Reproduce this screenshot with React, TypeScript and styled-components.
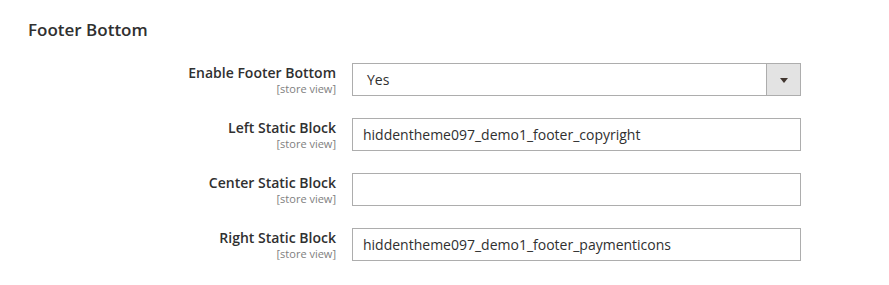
import React from 'react';
import styled, { createGlobalStyle } from 'styled-components';

const GlobalStyle = createGlobalStyle`
  body {
    margin: 0;
    background: #ffffff;
    font-family: "Open Sans", "Liberation Sans", sans-serif;
    color: #303030;
  }
`;

const Section = styled.section`
  padding: 19px 0 0 28px;
  width: 889px;
  height: 285px;
  box-sizing: border-box;
`;

const Title = styled.h2`
  margin: 0 0 22px;
  font-size: 17px;
  line-height: 22px;
  font-weight: 600;
  color: #303030;
`;

const Fields = styled.div`
  display: grid;
  grid-template-columns: 308px 449px;
  column-gap: 16px;
  row-gap: 22px;
`;

const LabelCell = styled.div`
  display: flex;
  flex-direction: column;
  align-items: flex-end;
  padding-top: 1px;
`;

const LabelText = styled.span`
  font-size: 14px;
  font-weight: 600;
  line-height: 18px;
  color: #303030;
`;

const Scope = styled.span`
  font-size: 11px;
  line-height: 13px;
  color: #808080;
`;

const TextInput = styled.input`
  box-sizing: border-box;
  width: 100%;
  height: 33px;
  margin: 0;
  padding: 0 10px;
  border: 1px solid #adadad;
  border-radius: 0;
  font-family: "Open Sans", "Liberation Sans", sans-serif;
  font-size: 14px;
  color: #303030;
  background: #ffffff;
  outline: none;
`;

const SelectBox = styled.div`
  box-sizing: border-box;
  display: flex;
  align-items: stretch;
  height: 33px;
  border: 1px solid #adadad;
  background: #ffffff;
`;

const SelectValue = styled.span`
  flex: 1;
  display: flex;
  align-items: center;
  padding-left: 14px;
  font-size: 14px;
  color: #303030;
`;

const SelectButton = styled.span`
  width: 33px;
  display: flex;
  align-items: center;
  justify-content: center;
  background: #e3e3e3;
  border-left: 1px solid #adadad;
`;

const Arrow = styled.span`
  width: 0;
  height: 0;
  border-left: 4px solid transparent;
  border-right: 4px solid transparent;
  border-top: 5px solid #41362f;
  margin-top: 1px;
`;

const fields = [
  { label: 'Left Static Block', value: 'hiddentheme097_demo1_footer_copyright' },
  { label: 'Center Static Block', value: '' },
  { label: 'Right Static Block', value: 'hiddentheme097_demo1_footer_paymenticons' },
];

const FieldLabel: React.FC<{ text: string }> = ({ text }) => (
  <LabelCell>
    <LabelText>{text}</LabelText>
    <Scope>[store view]</Scope>
  </LabelCell>
);

export default function App() {
  return (
    <>
      <GlobalStyle />
      <Section>
        <Title>Footer Bottom</Title>
        <Fields>
          <FieldLabel text="Enable Footer Bottom" />
          <SelectBox>
            <SelectValue>Yes</SelectValue>
            <SelectButton>
              <Arrow />
            </SelectButton>
          </SelectBox>
          {fields.map((f) => (
            <React.Fragment key={f.label}>
              <FieldLabel text={f.label} />
              <TextInput defaultValue={f.value} />
            </React.Fragment>
          ))}
        </Fields>
      </Section>
    </>
  );
}
